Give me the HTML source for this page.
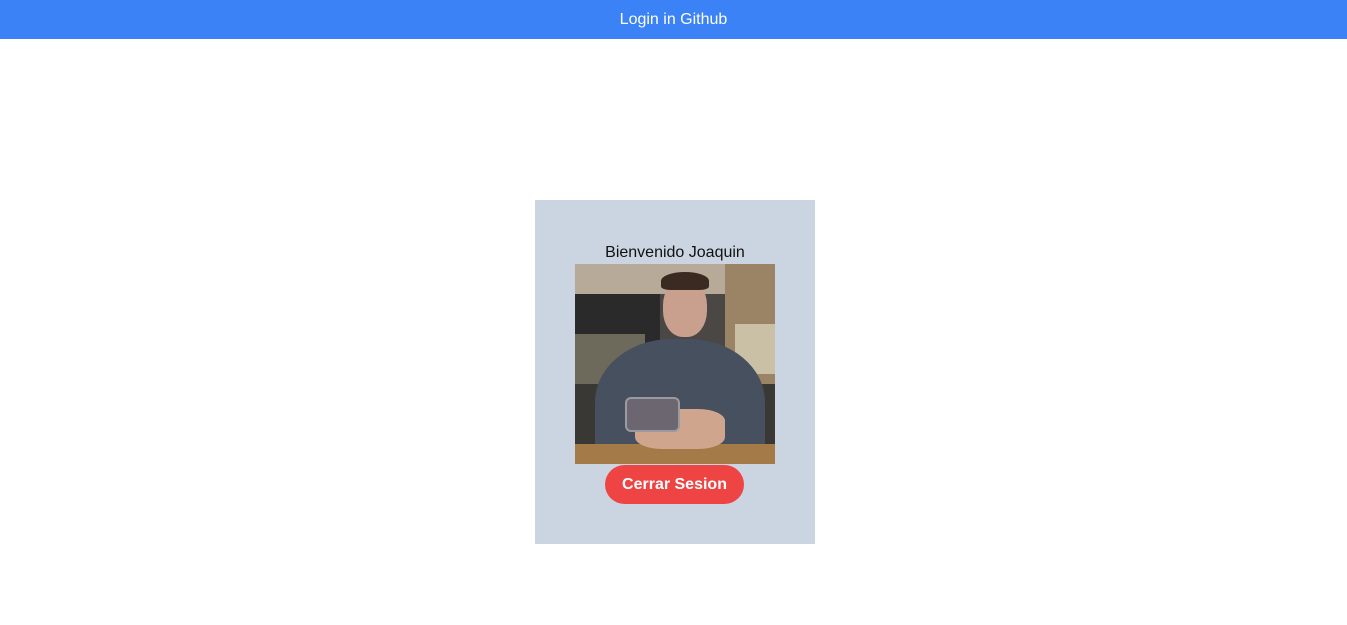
<!DOCTYPE html>
<html><head><meta charset="utf-8"><style>
*{margin:0;padding:0;box-sizing:border-box}
body{width:1347px;height:625px;background:#fff;font-family:"Liberation Sans",sans-serif;position:relative;overflow:hidden}
.hdr{position:absolute;left:0;top:0;width:1347px;height:39px;background:#3b82f6;color:#fff;font-size:16px;text-align:center;line-height:40px}
.card{position:absolute;left:535px;top:200px;width:280px;height:344px;background:#cbd5e1}
.t{position:absolute;left:0;width:280px;top:44px;text-align:center;font-size:16px;color:#111;line-height:18px}
.img{position:absolute;left:40px;top:64px;width:200px;height:200px;overflow:hidden;background:#4a4744}
.img div{position:absolute}
.btn{position:absolute;left:70px;top:265px;width:139px;height:39px;border-radius:20px;background:#ef4444;color:#fff;font-weight:bold;font-size:16px;text-align:center;line-height:39px}
</style></head><body>
<div class="hdr">Login in Github</div>
<div class="card">
<div class="t">Bienvenido Joaquin</div>
<div class="img">
<div style="left:0;top:0;width:200px;height:30px;background:#b8aa98"></div>
<div style="left:0;top:30px;width:85px;height:60px;background:#2b2a2a"></div>
<div style="left:0;top:70px;width:70px;height:50px;background:#6d6a5c"></div>
<div style="left:150px;top:0;width:50px;height:120px;background:#9b8466"></div>
<div style="left:160px;top:60px;width:40px;height:50px;background:#c9c0a6"></div>
<div style="left:0;top:120px;width:200px;height:60px;background:#3a3835"></div>
<div style="left:20px;width:170px;height:140px;border-radius:45% 45% 10% 10%;background:#47505e;top:75px"></div>
<div style="left:88px;top:15px;width:44px;height:58px;border-radius:45%;background:#c9a08d"></div>
<div style="left:86px;top:8px;width:48px;height:18px;border-radius:50% 50% 20% 20%;background:#3a2a22"></div>
<div style="left:0;top:180px;width:200px;height:20px;background:#a47a48"></div>
<div style="left:60px;top:145px;width:90px;height:40px;border-radius:30%;background:#d0a58e"></div>
<div style="left:50px;top:133px;width:55px;height:35px;border-radius:6px;background:#6b6670;border:2px solid #9a9aa0"></div>
</div>
<div class="btn">Cerrar Sesion</div>
</div>
</body></html>
